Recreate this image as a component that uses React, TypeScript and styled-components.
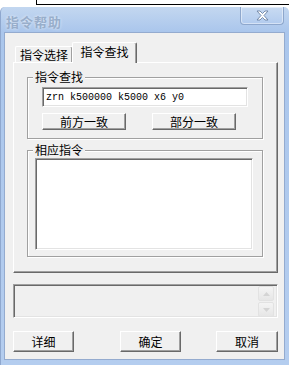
import styled, { createGlobalStyle } from "styled-components";

const GlobalStyle = createGlobalStyle`
  html, body {
    margin: 0;
    padding: 0;
    background: #ffffff;
  }
  body {
    width: 289px;
    height: 365px;
    overflow: hidden;
    font-family: "Noto Sans CJK SC", "Liberation Sans", sans-serif;
    font-size: 12px;
    color: #000;
  }
`;

const Page = styled.div`
  width: 289px;
  height: 365px;
  display: flex;
  flex-direction: column;
`;

// edge of the window sitting behind the dialog
const BehindStrip = styled.div`
  height: 7px;
  flex: none;
`;

const BehindBox = styled.div`
  margin-left: 36px;
  height: 4px;
  border-left: 1px solid #000;
  border-bottom: 1px solid #000;
`;

const Window = styled.div`
  flex: 1;
  display: flex;
  flex-direction: column;
  padding: 0 4px 5px 3px;
  background: linear-gradient(180deg, #c3d7f0 0px, #aac6ec 25px, #b4cdef 100%);
  border-left: 1px solid #8fa8cf;
  border-radius: 5px 5px 0 0;
`;

const TitleBar = styled.div`
  height: 25px;
  flex: none;
  display: flex;
  align-items: flex-start;
  justify-content: space-between;
`;

const Title = styled.div`
  margin: 5px 0 0 2px;
  font-size: 13px;
  font-weight: bold;
  letter-spacing: 1px;
  color: #98aecb;
  text-shadow: 0 0 3px rgba(255, 255, 255, 0.7);
`;

const CloseButton = styled.div`
  width: 42px;
  height: 17px;
  margin-right: 1px;
  display: flex;
  align-items: center;
  justify-content: center;
  border: 1px solid #8ea7cc;
  border-top: none;
  border-radius: 0 0 4px 4px;
  background: linear-gradient(180deg, #c9dbf2, #b2cbee);
  box-shadow: inset 0 0 0 1px rgba(255, 255, 255, 0.45);
`;

const Client = styled.div`
  flex: 1;
  display: flex;
  flex-direction: column;
  padding: 10px 0 0 8px;
  background: #f0f0f0;
  border: 1px solid #94abcf;
`;

const TabStrip = styled.div`
  height: 20px;
  display: flex;
  align-items: flex-end;
  padding-left: 2px;
  position: relative;
  z-index: 1;
  margin-bottom: -1px;
`;

const Tab = styled.div<{ $active?: boolean; $w: number }>`
  box-sizing: border-box;
  width: ${(p) => p.$w}px;
  height: ${(p) => (p.$active ? 21 : 16)}px;
  margin: ${(p) => (p.$active ? "0 -2px 0 -1px" : "0 0 1px 0")};
  display: flex;
  align-items: ${(p) => (p.$active ? "flex-start" : "center")};
  justify-content: center;
  padding-top: ${(p) => (p.$active ? "1px" : "0")};
  background: #f0f0f0;
  border-top: 1px solid #ffffff;
  border-left: 1px solid #ffffff;
  border-right: 1px solid #696969;
  box-shadow: inset -1px 0 0 #a0a0a0;
  border-radius: 2px 2px 0 0;
  line-height: 16px;
`;

const TabPanel = styled.div`
  box-sizing: border-box;
  width: 265px;
  height: 211px;
  padding: 14px 0 0 13px;
  background: #f0f0f0;
  border-top: 1px solid #ffffff;
  border-left: 1px solid #ffffff;
  border-right: 1px solid #696969;
  border-bottom: 1px solid #696969;
  box-shadow: inset -1px -1px 0 #a0a0a0;
`;

const Group = styled.div<{ $h: number; $mt?: number }>`
  position: relative;
  box-sizing: border-box;
  width: 236px;
  height: ${(p) => p.$h}px;
  margin-top: ${(p) => p.$mt ?? 0}px;
  border: 1px solid #a0a0a0;
  box-shadow: 1px 1px 0 #ffffff, inset 1px 1px 0 #ffffff;
`;

const Legend = styled.div`
  position: absolute;
  top: -9px;
  left: 5px;
  padding: 0 2px;
  background: #f0f0f0;
  line-height: 16px;
  font-size: 12px;
`;

const FindBody = styled.div`
  display: flex;
  flex-direction: column;
  padding: 9px 0 0 14px;
`;

const Sunken = styled.div<{ $w: number; $h: number }>`
  box-sizing: border-box;
  width: ${(p) => p.$w}px;
  height: ${(p) => p.$h}px;
  background: #ffffff;
  border-top: 1px solid #a0a0a0;
  border-left: 1px solid #a0a0a0;
  border-right: 1px solid #ffffff;
  border-bottom: 1px solid #ffffff;
  box-shadow: inset 1px 1px 0 #696969, inset -1px -1px 0 #e3e3e3;
`;

const InputText = styled.div`
  padding: 3px 0 0 3px;
  font-family: "Liberation Mono", "DejaVu Sans Mono", monospace;
  font-size: 10px;
  line-height: 13px;
  white-space: pre;
`;

const ButtonRow = styled.div`
  display: flex;
  gap: 26px;
  margin-top: 6px;
`;

const Button = styled.div<{ $w: number; $h: number; $ml?: number }>`
  box-sizing: border-box;
  width: ${(p) => p.$w}px;
  height: ${(p) => p.$h}px;
  margin-left: ${(p) => p.$ml ?? 0}px;
  display: flex;
  align-items: center;
  justify-content: center;
  background: #f0f0f0;
  border-top: 1px solid #ffffff;
  border-left: 1px solid #ffffff;
  border-right: 1px solid #696969;
  border-bottom: 1px solid #696969;
  box-shadow: inset -1px -1px 0 #a0a0a0;
  font-size: 12px;
`;

const ListWrap = styled.div`
  padding: 7px 0 0 7px;
`;

const InfoBox = styled(Sunken)`
  margin-top: 11px;
  background: #f0f0f0;
  display: flex;
  justify-content: flex-end;
  padding: 1px 3px 0 0;
`;

const ScrollBar = styled.div`
  width: 16px;
  display: flex;
  flex-direction: column;
  gap: 1px;
`;

const ScrollArrow = styled.div`
  box-sizing: border-box;
  height: 15px;
  display: flex;
  align-items: center;
  justify-content: center;
  background: linear-gradient(180deg, #f4f4f4, #e6e6e6);
  border: 1px solid #e2e2e2;
  border-radius: 2px;
`;

const Footer = styled.div`
  display: flex;
  margin-top: 13px;
`;

const Arrow = ({ up }: { up?: boolean }) => (
  <svg width="7" height="4" viewBox="0 0 7 4">
    <path d={up ? "M0 4 L3.5 0 L7 4 Z" : "M0 0 L3.5 4 L7 0 Z"} fill="#d4d4d4" />
  </svg>
);

export default function App() {
  return (
    <>
      <GlobalStyle />
      <Page>
        <BehindStrip>
          <BehindBox />
        </BehindStrip>
        <Window>
          <TitleBar>
            <Title>指令帮助</Title>
            <CloseButton>
              <svg width="13" height="11" viewBox="0 0 13 11">
                <path
                  d="M1 1 L4 1 L6.5 3.5 L9 1 L12 1 L8 5.5 L12 10 L9 10 L6.5 7.5 L4 10 L1 10 L5 5.5 Z"
                  fill="#ffffff"
                  stroke="#6c82a3"
                  strokeWidth="0.9"
                  strokeLinejoin="round"
                />
              </svg>
            </CloseButton>
          </TitleBar>
          <Client>
            <TabStrip>
              <Tab $w={58}>指令选择</Tab>
              <Tab $w={65} $active>
                指令查找
              </Tab>
            </TabStrip>
            <TabPanel>
              <Group $h={62}>
                <Legend>指令查找</Legend>
                <FindBody>
                  <Sunken $w={206} $h={20}>
                    <InputText>zrn k500000 k5000 x6 y0</InputText>
                  </Sunken>
                  <ButtonRow>
                    <Button $w={84} $h={17}>前方一致</Button>
                    <Button $w={84} $h={17}>部分一致</Button>
                  </ButtonRow>
                </FindBody>
              </Group>
              <Group $h={107} $mt={11}>
                <Legend>相应指令</Legend>
                <ListWrap>
                  <Sunken $w={218} $h={92} />
                </ListWrap>
              </Group>
            </TabPanel>
            <InfoBox $w={265} $h={34}>
              <ScrollBar>
                <ScrollArrow>
                  <Arrow up />
                </ScrollArrow>
                <ScrollArrow>
                  <Arrow />
                </ScrollArrow>
              </ScrollBar>
            </InfoBox>
            <Footer>
              <Button $w={61} $h={21}>详细</Button>
              <Button $w={61} $h={21} $ml={46}>确定</Button>
              <Button $w={62} $h={21} $ml={35}>取消</Button>
            </Footer>
          </Client>
        </Window>
      </Page>
    </>
  );
}
